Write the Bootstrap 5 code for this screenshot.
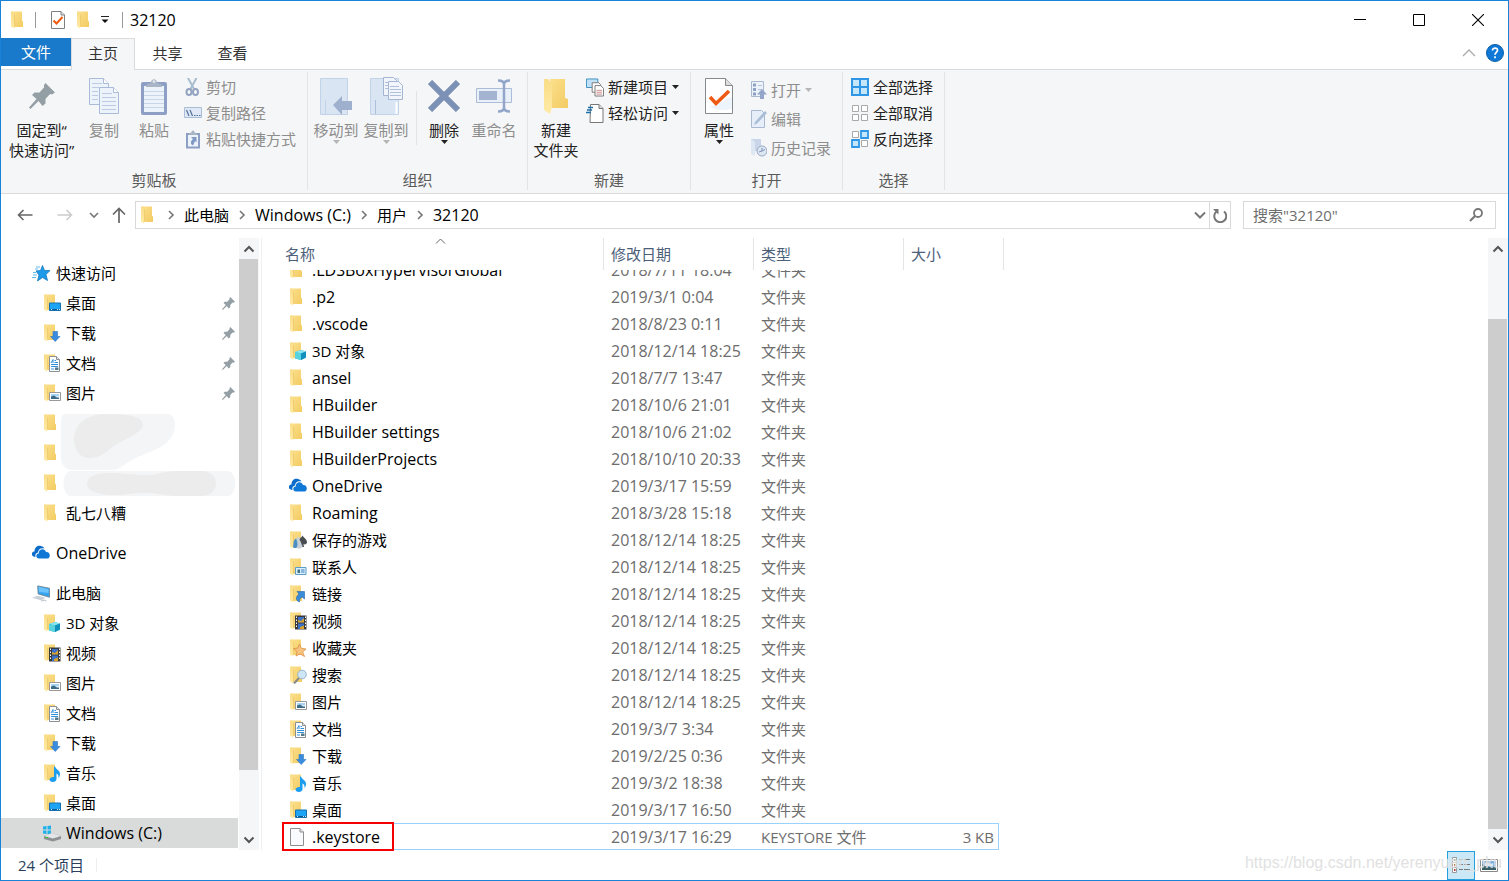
<!DOCTYPE html>
<html lang="zh-CN">
<head>
<meta charset="utf-8">
<meta name="viewport" content="width=device-width, initial-scale=1">
<title>32120</title>
<link href="https://cdn.jsdelivr.net/npm/bootstrap@5.3.0/dist/css/bootstrap.min.css" rel="stylesheet">
<script src="https://cdn.jsdelivr.net/npm/bootstrap@5.3.0/dist/js/bootstrap.bundle.min.js"></script>
<style>
body{font-family:"Open Sans","Noto Sans CJK SC",sans-serif;font-size:15px;line-height:20px;color:#000;background:#fff}
svg{display:block;flex:none}
button{border:0;background:none;padding:0;color:inherit;font:inherit}
a{color:inherit;text-decoration:none}
.latin{font-size:16px}
.frame{border:1px solid #1883d7}
/* title bar */
.titlebar{height:37px;padding:0 1px 0 9px}
.tick{width:1px;height:16px;background:#999}
.quick{gap:7px}
.quick .props{margin:0 4px 0 8px}
.quick .last{margin-left:6px}
.winbtn{width:59px;height:37px;display:flex;align-items:center;justify-content:center}
/* tabs */
.tabs{height:31px;color:#333}
.tabs button{width:65px;height:31px;padding-bottom:2px}
.tabs .filetab{width:70px;height:28px;padding:0;background:#1979ca;color:#fff}
.tabs .active{position:relative;z-index:1;width:64px;height:32px;padding-bottom:3px;background:#f5f6f7;border:1px solid #dadbdc;border-bottom:0}
.tools{gap:10px;padding:0 4px 1px 0}
/* ribbon */
.ribbon{height:125px;background:#f5f6f7;border-top:1px solid #dadbdc;border-bottom:1px solid #dadbdc;padding:2px 0 3px;color:#222}
.group{border-right:1px solid #e2e3e4;padding:0 3px}
.group h2{font-size:15px;line-height:20px;margin:0;font-weight:400;text-align:center;color:#5a5a5a}
.big{width:50px;display:flex;flex-direction:column;align-items:center;white-space:nowrap}
.big .pic{height:48px;display:flex;align-items:center;justify-content:center}
.big.wide{width:75px}
.ribbon button:disabled{color:#8d8d8d}
.stack3{padding:2px 8px 0 5px}
.stack3 button{display:flex;align-items:center;gap:4px;height:26px;white-space:nowrap}
.stack3.roomy{padding:3px 8px 0 7px}
.stack3.roomy button{height:29px}
.rule{width:1px;height:54px;background:#e2e3e4;margin:19px 2px 0 5px}
.tail{width:5px}
/* address row */
.addr{height:44px;padding-bottom:2px}
.box{height:28px;border:1px solid #d9d9d9}
.crumbs svg{margin:0 9px}
.crumbs .open{border-right:1px solid #d9d9d9}
.crumbs .open svg{margin:0 3px}
.crumbs .again svg{margin:0 3px}
.find{width:253px;margin-left:12px}
.find input{border:0;outline:0;background:none;min-width:0;color:#6d6d6d;padding-left:9px}
.find input::placeholder{color:#6d6d6d;opacity:1}
/* navigation pane */
.side{width:261px;border-right:1px solid #f0f0f0;padding-right:2px}
.tree{padding-top:20px}
.tree a{display:flex;align-items:center;gap:5px;height:30px;padding:0 4px 0 42px}
.tree a.root{padding-left:31px;gap:6px}
.tree .gap-top{margin-top:10px}
.tree a.here{background:#d9dbda;margin-right:1px}
.hid{position:relative}
.smudge{position:absolute;left:60px;top:6px;z-index:1}
.sbar{width:20px;background:#f5f6f7;flex:none}
.sbar button{width:19px;height:21px;display:flex;align-items:center;justify-content:center}
.thumb{width:19px;background:#cdcdcd}
/* file list */
.files{width:722px;table-layout:fixed;margin-left:20px;border-collapse:separate;border-spacing:0}
.files th{height:32px;padding:0 7px;font-weight:400;color:#4c607a;border-right:1px solid #e5e5e5}
.files th:first-child{padding-left:3px}
.files th:nth-child(4){border-right:0}
.files td{height:27px;padding:0 7px;color:#6d6d6d;white-space:nowrap;line-height:20px}
.files th:last-child,.files td:last-child{padding:0}
.files td:nth-child(2){font-size:16px}
.files td:nth-child(4){padding-right:4px;text-align:right}
.files tr>:nth-child(1){position:relative}
.nm{display:flex;align-items:center;gap:5px;color:#000}
.files tr.cut td{height:13px;padding-top:0}
.cut .clip{height:13px;overflow:hidden;display:flex;align-items:flex-end}
.cut .clip>*{height:27px;flex:none;display:flex;align-items:center}
.files tr.sel td:not(:last-child){border:solid #99d1ff;border-width:1px 0}
.files tr.sel td:nth-child(4){border-right-width:1px}
.ring{position:absolute;left:0;top:-2px;width:112px;height:29px;border:2px solid #f40000}
.sort{position:absolute;left:153px;top:0}
/* status bar */
.status{height:30px;color:#2b3f5c;padding-left:17px;padding-right:5px}
.status .split{width:1px;height:14px;background:#eee;margin-left:12px}
.viewbtn{width:28px;height:29px;display:flex;align-items:center;justify-content:center}
.viewbtn.on{background:#cbe8f6;border:1px solid #26a0da}
.wm{position:absolute;right:6px;bottom:7px;font:16px/20px "Liberation Sans",sans-serif;color:#dcdcdc;opacity:.85;text-shadow:0 0 1px #fff}
</style>
</head>
<body>
<svg width="0" height="0" class="position-absolute" aria-hidden="true">
<defs>
<linearGradient id="gy" x1="0" x2="1" y1="0" y2="1"><stop offset="0" stop-color="#fbe08c"/><stop offset="1" stop-color="#f3cb62"/></linearGradient>
<linearGradient id="gf" x1="0" x2="0" y1="0" y2="1"><stop offset="0" stop-color="#f9dc86"/><stop offset="1" stop-color="#ffeaa6"/></linearGradient>
<symbol id="fold" viewBox="0 0 18 18"><path d="M2 .5h10v9l1 1v5.500H4z" fill="url(#gy)"/><path d="M1 .5h2l2 2v12l-1 3-3-2z" fill="url(#gf)"/><path d="M4.500 3.500v12" stroke="#edc766" stroke-width=".8"/></symbol>
<symbol id="i-desk" viewBox="0 0 18 18"><use href="#fold"/><path d="M6.500 9h11v7.500h-11z" fill="#1ea4f5" stroke="#1670b0"/><path d="M7 15.500h10" stroke="#0b5a94"/><path d="M8 15.500h1m5 0h1m1 0h1" stroke="#cfe9fa"/></symbol>
<symbol id="i-down" viewBox="0 0 18 18"><use href="#fold"/><path d="M10 7.500h4.500v5h2.500l-4.800 5-4.700-5h2.500z" fill="#3a8dde" stroke="#2c76c0" stroke-width=".6"/></symbol>
<symbol id="i-doc" viewBox="0 0 18 18"><use href="#fold"/><path d="M6.500 2.500h7l3 3v12h-10z" fill="#fff" stroke="#8a8f94"/><path d="M13.500 2.500v3h3" fill="#e8e8e8" stroke="#8a8f94"/><path d="M8 9l2-3.500V9M11.500 6.500h1.500M11.500 8.500H15M8 10.500h7M8 12.500h7" fill="none" stroke="#2f8fd8"/><path d="M8 15h3" stroke="#2f8fd8"/><path d="M12 13.500h3.500v2.500H12z" fill="#557a8a"/></symbol>
<symbol id="i-pic" viewBox="0 0 18 18"><use href="#fold"/><path d="M6.500 8.500h11v8h-11z" fill="#fff" stroke="#999"/><path d="M8 10h8v2.500H8z" fill="#a9d3f3"/><path d="M8 15v-2.500l3-1 3 2h2V15z" fill="#3b6a86"/></symbol>
<symbol id="i-3d" viewBox="0 0 18 18"><use href="#fold"/><path d="M6 10l6-2 5 1.500v6L12 18l-6-1.500z" fill="#27b7d3"/><path d="M6 10l6-2 5 1.500-5 2z" fill="#8be5ee"/><path d="M12 11.500l5-2v6L12 18z" fill="#1190bd"/><path d="M6 10l6 1.500V18l-6-1.500z" fill="#59d3de"/></symbol>
<symbol id="i-vid" viewBox="0 0 18 18"><use href="#fold"/><path d="M6 3.500h11.500v14H6z" fill="#3a3a3a"/><path d="M9 5h6v5.500H9zM9 11.500h6V17H9z" fill="#3a70c8"/><path d="M9 8l3 1 3-3v4.500H9zM11 15l4-1.500V17h-4z" fill="#d9a22c"/><path d="M7.500 4.500v12M16.500 4.500v12" stroke="#fff" stroke-dasharray="1.500 1.500"/></symbol>
<symbol id="i-mus" viewBox="0 0 18 18"><use href="#fold"/><path d="M12 2.500c1 3 5 3.500 5 7.500 0 1.500-.6 3-1.500 4 .5-3-1-4-2-4.500V15c0 2-1.800 3-3.700 3S6.500 17 6.500 15.500 9 12.500 11 13V2.500z" fill="#1b9df0"/></symbol>
<symbol id="i-game" viewBox="0 0 18 18"><use href="#fold"/><path d="M4 16c1-4 0-7 3-8.500l3 2 .5 4 .5 3.500H5z" fill="#4c8fc5"/><path d="M13.500 4.500c1 2 4.500 4 4.500 6.500 0 2-2 3-3.500 2l.5 3h-4l1-3c-2 0-3-1-3-2.500C9 8 12.500 7 13.500 4.500z" fill="#474d52"/><path d="M8.500 6c2-1 3 1 2 3 2 2 1.500 4 3 6 .5 3-6 3.500-6 1.500 1.500-2 1-4 .5-6.500-1-1-.5-3 .5-4z" fill="#c9d1d6"/></symbol>
<symbol id="i-con" viewBox="0 0 18 18"><use href="#fold"/><path d="M6.500 9.500h10.500v7H6.500z" fill="#d9effb" stroke="#5a9dc8"/><path d="M8.500 11.500h2.500v3.500H8.500z" fill="#3e7288"/><path d="M12 12h3.500m-3.500 2h3.500" stroke="#3a7ac0"/></symbol>
<symbol id="i-link" viewBox="0 0 18 18"><use href="#fold"/><path d="M8 6.500h7.500v7.500L13 12c-2 1-3 3-2.500 5C7 16 6 12 10 9z" fill="#3a8bd8" stroke="#2565a8" stroke-width=".6"/></symbol>
<symbol id="i-fav" viewBox="0 0 18 18"><use href="#fold"/><path d="M10.500 5l1.800 4.200 4.700.8-3.300 3 1.800 4.500-4.500-2.600-4 2.100 1-4.300L4.500 9.500l4.200-.3z" fill="#f6c27c" stroke="#dd9148" stroke-width=".8"/></symbol>
<symbol id="i-srch" viewBox="0 0 18 18"><use href="#fold"/><path d="M5 17.500l5-5.500" stroke="#878787" stroke-width="2"/><circle cx="13" cy="8.500" r="4.300" fill="#cfe6f8" stroke="#93b3cc"/></symbol>
<symbol id="i-cloud" viewBox="0 0 18 18"><path d="M3.500 13C-1.500 12.500-1 7.500 2.500 7.500 2.500 3 6 1 9 2c2 .3 3 1.500 3.500 2.500C8.500 3.500 6 6 6 8.500 3.500 9 3 11 3.500 13z" fill="#0d6cc9"/><path d="M7 14.500c-3.500 0-3.500-5-.3-5C6.500 5 12.500 3.500 14 8c4.500-.5 5 6 1.500 6.500z" fill="#0f78d7"/></symbol>
<symbol id="i-star" viewBox="0 0 18 18"><path d="M10.500 1.500l2 5 5.500 0-4 4 1.500 6-5-3-5 3.500 1.500-6L4 7l4.500-.5z" fill="#1f9ae8" stroke="#1779bf" stroke-width=".8"/><path d="M4 3h4M3 5h3M1 8.500h3M1 11h4M0 13.500h4" stroke="#3aa7ec" stroke-width=".8"/></symbol>
<symbol id="i-pc" viewBox="0 0 19 18"><path d="M6 1.500L18.500 4v9.500L6.500 10z" fill="#35a3ee" stroke="#6f8291" stroke-width=".9"/><path d="M7 2.500L17.500 5v4l-10-1z" fill="#6cc4fa"/><path d="M0 14l6-2 8 2-4 3z" fill="#c9d1d8"/><path d="M10 17.500l3-1 2 1" stroke="#aab4bd" fill="none"/></symbol>
<symbol id="i-drive" viewBox="0 0 18 18"><path d="M0 2.500l3.500-.5v3.500H0zM4.500 2L8 1.500v4H4.500zM0 6.500h3.500V10L0 9.500zM4.500 6.500H8v4l-3.500-.5z" fill="#1fb1ea"/><path d="M1 12l8-3 9 3v3l-8 2.500L1 15z" fill="#8d9194"/><path d="M1 12l8-3 9 3-8 2.500z" fill="#e3e5e6"/><path d="M2 13.500h3" stroke="#37c837"/></symbol>
<symbol id="i-file" viewBox="0 0 18 18"><path d="M1.500.5h9.500l3.500 3.500v13.500h-13z" fill="#f8fafd" stroke="#8e8e8e"/><path d="M11 .5V4h3.500" fill="#e6e6e6" stroke="#8e8e8e"/></symbol>
<symbol id="i-pin" viewBox="0 0 26 26"><path d="M16.500 0L26 9.500 23 11.500l-2-.5-4.500 5v4.500l-3 2.500-4-5L1.500 26 0 24.500l7.500-8.500-4.500-4 2.500-2.500h5L15 4.500V2z" fill="#949fa5"/></symbol>
<symbol id="i-crumb" viewBox="0 0 8 10"><path d="M2 1l4 4-4 4" fill="none" stroke="#777" stroke-width="1.600"/></symbol>
<symbol id="i-tri" viewBox="0 0 7 4"><path d="M0 0h7L3.500 4z" fill="currentColor"/></symbol>
<symbol id="i-up" viewBox="0 0 12 8"><path d="M1.500 6.500L6 2l4.500 4.500" fill="none" stroke="#555" stroke-width="2"/></symbol>
<symbol id="i-dn" viewBox="0 0 12 8"><path d="M1.500 1.500L6 6l4.500-4.500" fill="none" stroke="#555" stroke-width="2"/></symbol>
</defs>
</svg>

<div class="frame vh-100 d-flex flex-column overflow-hidden position-relative">
  <header class="titlebar d-flex align-items-center">
    <div class="quick d-flex align-items-center">
      <svg width="18" height="18"><use href="#fold"/></svg>
      <span class="tick"></span>
      <button aria-label="属性" class="props"><svg width="14" height="18"><path d="M.5.500h9.500l3.500 3.500v13.500H.5z" fill="#fff" stroke="#7f8285"/><path d="M10 .5V4h3.500" fill="#ddd" stroke="#7f8285"/><path d="M2.500 9.500l3 3 6-6.500" fill="none" stroke="#ee5a14" stroke-width="2"/></svg></button>
      <button aria-label="新建文件夹"><svg width="18" height="18"><use href="#fold"/></svg></button>
      <button aria-label="自定义快速访问工具栏"><svg width="8" height="9"><path d="M0 1.500h8" stroke="#222"/><path d="M.5 4.500h7L4 8z" fill="#111"/></svg></button>
      <span class="tick last"></span>
      <span class="latin">32120</span>
    </div>
    <div class="d-flex ms-auto">
      <button class="winbtn" aria-label="最小化"><svg width="12" height="12"><path d="M0 5.500h12" stroke="#000"/></svg></button>
      <button class="winbtn" aria-label="最大化"><svg width="12" height="12"><path d="M.5.500h11v11H.5z" fill="none" stroke="#000"/></svg></button>
      <button class="winbtn" aria-label="关闭"><svg width="12" height="12"><path d="M0 0l12 12M12 0L0 12" stroke="#000" stroke-width="1.100"/></svg></button>
    </div>
  </header>

  <nav class="tabs d-flex align-items-start">
    <button class="filetab">文件</button>
    <button class="active">主页</button>
    <button>共享</button>
    <button>查看</button>
    <div class="tools ms-auto d-flex align-items-center h-100">
      <button class="w-auto h-auto p-0" aria-label="最小化功能区"><svg width="14" height="8"><path d="M1 7l6-6 6 6" fill="none" stroke="#aaa" stroke-width="1.300"/></svg></button>
      <button class="w-auto h-auto p-0" aria-label="帮助"><svg width="18" height="18"><circle cx="9" cy="9" r="8.500" fill="#0f78d7" stroke="#0b5fa8"/><path d="M6.500 6.500c0-3.500 5.500-3 5 0-.3 1.800-2.500 2-2.500 4.300M9 12.200v2" fill="none" stroke="#fff" stroke-width="1.700"/></svg></button>
    </div>
  </nav>

  <section class="ribbon d-flex flex-none">
    <div class="group d-flex flex-column">
      <div class="d-flex flex-grow-1">
        <button class="big wide"><span class="pic"><svg width="26" height="26"><use href="#i-pin"/></svg></span><span>固定到“<br>快速访问”</span></button>
        <button class="big" disabled><span class="pic"><svg width="30" height="36"><g stroke="#a9bbd6" fill="#edf3fb"><path d="M.5.500h14l5 5v21H.5z"/><path d="M10.500 9.500h14l5 5v21h-19z"/><path d="M14.500.5v5h5M24.500 9.500v5h5" fill="#fff"/></g><path d="M3 5.500h10M3 9.500h7M3 13.500h6M3 17.500h6M3 21.500h6M13 15.500h10M13 19.500h14M13 23.500h14M13 27.500h14M13 31.500h14" stroke="#bccbe2"/></svg></span>复制</button>
        <button class="big" disabled><span class="pic"><svg width="28" height="37"><rect x="1" y="4" width="26" height="33" rx="2" fill="#8d9fc4"/><path d="M4 8h20v26H4z" fill="#edf3fb"/><path d="M4 13.500h20M4 17.500h20M4 21.500h20M4 25.500h20M4 29.500h20" stroke="#c9d6e8"/><path d="M6 9c0-4 3-3 5-4 0-5 6-5 6 0 2 1 5 0 5 4z" fill="#a9b5c4"/><circle cx="14" cy="3.500" r="1.500" fill="#dfe5ec"/></svg></span>粘贴</button>
        <div class="stack3 d-flex flex-column">
          <button disabled><svg width="18" height="18"><path d="M4 0l6 11M12.500 0l-6 11" stroke="#a9bdd0" stroke-width="2"/><g fill="none" stroke="#93a3c0" stroke-width="2"><ellipse cx="5" cy="14" rx="2.500" ry="3"/><ellipse cx="11.500" cy="14" rx="2.500" ry="3"/></g></svg>剪切</button>
          <button disabled><svg width="18" height="12"><path d="M.5.500h17v10H.5z" fill="#dfe8f4" stroke="#a9bdd6"/><path d="M2.500 3l2.500 6M6 3l2.500 6M10 8.500h1.500m1 0H14m1 0h1.500" stroke="#53709c" stroke-width="1.200"/></svg>复制路径</button>
          <button disabled><svg width="18" height="19"><path d="M3 4h12v13.500H3z" fill="#edf3fb" stroke="#8d9fc4" stroke-width="2"/><path d="M5 5c0-3 2-1.500 2.500-3C8 0 10 0 10.500 2 11 3.500 13 2 13 5z" fill="#a9b5c4"/><path d="M7 7h5.500v5.500L11 11l-2 4.500C6 14 6.500 11 9 9z" fill="#7f98c4"/></svg>粘贴快捷方式</button>
        </div>
      </div>
      <h2>剪贴板</h2>
    </div>

    <div class="group d-flex flex-column">
      <div class="d-flex flex-grow-1">
        <button class="big" disabled><span class="pic"><svg width="33" height="37"><path d="M.5.500h27v36H.5z" fill="#dae5f4" stroke="#c2d2e8"/><path d="M5.500 22v14" stroke="#c2d2e8"/><path d="M13 27l9-9v5h10v9H22v5z" fill="#9fb0cf"/></svg></span>移动到<svg width="7" height="4"><use href="#i-tri" opacity=".6"/></svg></button>
        <button class="big" disabled><span class="pic"><svg width="33" height="38"><path d="M.5 1.500h28v36H.5z" fill="#dae5f4" stroke="#c2d2e8"/><path d="M13.500.500h10l3 3v15h-13z" fill="#f2f6fc" stroke="#a5b6d2"/><path d="M18.500 4.500h10l4 4v14h-14z" fill="#f2f6fc" stroke="#a5b6d2"/><path d="M15 5.500h3M15 8.500h3M15 11.500h3M20 9.500h9M20 12.500h11M20 15.500h11M20 18.500h11M5.500 23v14" stroke="#aebfda"/><path d="M26.500 25v12" stroke="#fff" stroke-width="2"/></svg></span>复制到<svg width="7" height="4"><use href="#i-tri" opacity=".6"/></svg></button>
        <span class="rule"></span>
        <button class="big"><span class="pic"><svg width="32" height="32"><path d="M2 2l28 28M30 2L2 30" stroke="#7d90b5" stroke-width="6"/></svg></span>删除<svg width="7" height="4"><use href="#i-tri"/></svg></button>
        <button class="big" disabled><span class="pic"><svg width="37" height="34"><path d="M.5 9.500h35v14H.5z" fill="#e9f0fa" stroke="#a9bcd8"/><path d="M3 12h18v9H3z" fill="#a3b3d0"/><path d="M22 1.500c4 0 6 1 6 4 0-3 2-4 6-4M28 4v26M22 32.500c4 0 6-1 6-4 0 3 2 4 6 4" fill="none" stroke="#93a5c8" stroke-width="2.500"/></svg></span>重命名</button>
        <span class="tail"></span>
      </div>
      <h2>组织</h2>
    </div>

    <div class="group d-flex flex-column">
      <div class="d-flex flex-grow-1">
        <button class="big"><span class="pic"><svg width="24" height="35"><path d="M6 0h15v19l3 1v9H8z" fill="url(#gy)"/><path d="M0 0h4l4 5v23l-2 7-6-4z" fill="url(#gf)"/></svg></span><span>新建<br>文件夹</span></button>
        <div class="stack3 d-flex flex-column">
          <button><svg width="18" height="19" viewBox="0 0 19 19"><path d="M.5.500h12v9H.5z" fill="#bfe0f6" stroke="#3b8fc0"/><path d="M6.500 4.500h7l2 2v8h-9z" fill="#fff" stroke="#777"/><path d="M9.500 7.500h6l3 3v8h-9z" fill="#fff" stroke="#777"/><path d="M11 12.500h6m-6 2h6m-6 2h6" stroke="#c98a8a"/></svg>新建项目<svg width="7" height="4"><use href="#i-tri"/></svg></button>
          <button><svg width="18" height="19" viewBox="0 0 18 19"><path d="M4.500.500h8.500l4 4v14H4z" fill="#fff" stroke="#777"/><path d="M13 .5v4h4" fill="#ddd" stroke="#777"/><path d="M2 3.500h5M1 6h5M0 8.500h5" stroke="#1f6fa8" stroke-width="1.500"/></svg>轻松访问<svg width="7" height="4"><use href="#i-tri"/></svg></button>
        </div>
      </div>
      <h2>新建</h2>
    </div>

    <div class="group d-flex flex-column">
      <div class="d-flex flex-grow-1">
        <button class="big"><span class="pic"><svg width="28" height="36"><path d="M.5.500h20l7 7v28H.5z" fill="#fff" stroke="#85898c"/><path d="M20.500.5v7h7" fill="#ddd" stroke="#85898c"/><path d="M4 28c10 2 14-8 23-9v12c-8 1-14 3-23-3z" fill="#edf4fb"/><path d="M5 19l6 6.500L24 13" fill="none" stroke="#ee5a14" stroke-width="3.500"/></svg></span>属性<svg width="7" height="4"><use href="#i-tri"/></svg></button>
        <div class="stack3 roomy d-flex flex-column">
          <button disabled><svg width="16" height="18"><path d="M.5.500h12v15H.5z" fill="#edf3fb" stroke="#a9b9d2"/><path d="M2 2.500h3v3H2zM2 7h3v3H2zM2 11.500h3v3H2z" fill="#8ea2c5"/><path d="M7 4.500h4M7 8.500h4" stroke="#b5c4da"/><path d="M11 8l5 5.500h-3V18H9v-4.500H6z" fill="#93a5c8"/></svg>打开<svg width="7" height="4"><use href="#i-tri" opacity=".6"/></svg></button>
          <button disabled><svg width="16" height="18"><path d="M.5.500h10l3 3v14H.5z" fill="#e6eff9" stroke="#a9b9d2"/><path d="M3 15l1-3L14 1l2 2L6 13.500z" fill="#a9bdd6"/></svg>编辑</button>
          <button disabled><svg width="16" height="18"><path d="M0 0h10v12H0z" fill="#c9d6ea"/><path d="M0 0l4 3v14l-4-2z" fill="#dde7f4"/><circle cx="11" cy="12" r="5" fill="#dde7f2" stroke="#98a9c6"/><path d="M11 9v3l3-1.500M8 13l3-1" fill="none" stroke="#7f93b8"/></svg>历史记录</button>
        </div>
      </div>
      <h2>打开</h2>
    </div>

    <div class="group d-flex flex-column">
      <div class="d-flex flex-grow-1">
        <div class="stack3 d-flex flex-column">
          <button><svg width="18" height="18"><path d="M0 0h18v18H0z" fill="#2f97e6"/><path d="M2 2h6v6H2zM10 2h6v6h-6zM2 10h6v6H2zM10 10h6v6h-6z" fill="#c5e6fb"/></svg>全部选择</button>
          <button><svg width="18" height="18"><path d="M1.500 1.500h6v6h-6zM10.500 1.500h6v6h-6zM1.500 10.500h6v6h-6zM10.500 10.500h6v6h-6z" fill="#fff" stroke="#a9a9a9"/></svg>全部取消</button>
          <button><svg width="18" height="18"><path d="M1.500 1.500h6v6h-6zM10.500 10.500h6v6h-6z" fill="#fff" stroke="#a9a9a9"/><path d="M10 1h7v7h-7zM1 10h7v7H1z" fill="#c5e6fb" stroke="#2f97e6" stroke-width="1.800"/></svg>反向选择</button>
        </div>
      </div>
      <h2>选择</h2>
    </div>
  </section>

  <div class="addr d-flex align-items-center flex-none ps-3 pe-2">
    <button aria-label="后退"><svg width="16" height="12"><path d="M15.500 6H1.500M6.500 1l-5 5 5 5" fill="none" stroke="#666" stroke-width="1.600"/></svg></button>
    <button aria-label="前进" class="ms-4" disabled><svg width="16" height="12"><path d="M.5 6h14M9.500 1l5 5-5 5" fill="none" stroke="#ccc" stroke-width="1.600"/></svg></button>
    <button aria-label="最近" class="ms-3"><svg width="10" height="8"><path d="M1 2l4 4 4-4" fill="none" stroke="#777" stroke-width="1.600"/></svg></button>
    <button aria-label="向上" class="ms-2 ps-1"><svg width="16" height="16"><path d="M8 16V1.500M2 7.500l6-6 6 6" fill="none" stroke="#666" stroke-width="1.700"/></svg></button>
    <div class="box crumbs d-flex align-items-center flex-grow-1 ms-2">
      <svg width="18" height="18" class="ms-1 me-0"><use href="#fold"/></svg>
      <svg width="8" height="10"><use href="#i-crumb"/></svg><a href="#">此电脑</a>
      <svg width="8" height="10"><use href="#i-crumb"/></svg><a href="#" class="latin">Windows (C:)</a>
      <svg width="8" height="10"><use href="#i-crumb"/></svg><a href="#">用户</a>
      <svg width="8" height="10"><use href="#i-crumb"/></svg><a href="#" class="latin">32120</a>
      <button class="open ms-auto h-100" aria-label="历史"><svg width="12" height="8"><path d="M1 1.500l5 5 5-5" fill="none" stroke="#777" stroke-width="2"/></svg></button>
      <button class="again" aria-label="刷新"><svg width="14" height="15"><path d="M3.500 3.500a6 6 0 1 0 7.500 0" fill="none" stroke="#777" stroke-width="2"/><path d="M0 1h5.500v5.500z" fill="#777"/></svg></button>
    </div>
    <div class="box find d-flex align-items-center me-1">
      <input type="search" class="flex-grow-1" aria-label="搜索" placeholder='搜索"32120"'>
      <button class="px-2 me-1" aria-label="开始搜索"><svg width="14" height="14"><circle cx="9" cy="5" r="4" fill="none" stroke="#777" stroke-width="1.800"/><path d="M6 8L1 13" stroke="#777" stroke-width="2.200"/></svg></button>
    </div>
  </div>

  <main class="d-flex flex-grow-1" style="min-height:0">
    <aside class="side d-flex flex-none">
      <nav class="tree flex-grow-1">
        <a href="#" class="root"><svg width="18" height="18"><use href="#i-star"/></svg>快速访问</a>
        <a href="#"><svg width="18" height="18"><use href="#i-desk"/></svg>桌面<svg width="13" height="13" class="ms-auto"><use href="#i-pin"/></svg></a>
        <a href="#"><svg width="18" height="18"><use href="#i-down"/></svg>下载<svg width="13" height="13" class="ms-auto"><use href="#i-pin"/></svg></a>
        <a href="#"><svg width="18" height="18"><use href="#i-doc"/></svg>文档<svg width="13" height="13" class="ms-auto"><use href="#i-pin"/></svg></a>
        <a href="#"><svg width="18" height="18"><use href="#i-pic"/></svg>图片<svg width="13" height="13" class="ms-auto"><use href="#i-pin"/></svg></a>
        <div class="hid">
          <a href="#" aria-label="文件夹"><svg width="18" height="18"><use href="#fold"/></svg></a>
          <a href="#" aria-label="文件夹"><svg width="18" height="18"><use href="#fold"/></svg></a>
          <a href="#" aria-label="文件夹"><svg width="18" height="18"><use href="#fold"/></svg></a>
          <svg class="smudge" width="174" height="83"><path d="M5 0h101c6 0 8 6 8 10 0 24-28 27-43 36-8 5-14 10-20 10H12C4 56 0 50 0 44V6c0-3 2-6 5-6z" fill="#f4f5f7"/><path d="M13 26C13 8 28 0 46 0c16 0 36 1 36 11 0 8-24 16-33 24-8 7-14 9-21 9-9 0-15-8-15-18z" fill="#ececec"/><path d="M10 57h156c11 0 11 25 0 25H10C0 82 0 57 10 57z" fill="#f4f5f7"/><path d="M26 70c0-8 10-11 22-11 14 0 24 2 38 2 16 0 10-4 36-4h18c20 0 20 25 0 25h-24c-14 0-14-3-34-3-14 0-14 2-30 2-14 0-26-4-26-11z" fill="#ececec"/></svg>
        </div>
        <a href="#"><svg width="18" height="18"><use href="#fold"/></svg>乱七八糟</a>
        <a href="#" class="root gap-top latin"><svg width="18" height="18"><use href="#i-cloud"/></svg>OneDrive</a>
        <a href="#" class="root gap-top"><svg width="18" height="18"><use href="#i-pc"/></svg>此电脑</a>
        <a href="#"><svg width="18" height="18"><use href="#i-3d"/></svg>3D 对象</a>
        <a href="#"><svg width="18" height="18"><use href="#i-vid"/></svg>视频</a>
        <a href="#"><svg width="18" height="18"><use href="#i-pic"/></svg>图片</a>
        <a href="#"><svg width="18" height="18"><use href="#i-doc"/></svg>文档</a>
        <a href="#"><svg width="18" height="18"><use href="#i-down"/></svg>下载</a>
        <a href="#"><svg width="18" height="18"><use href="#i-mus"/></svg>音乐</a>
        <a href="#"><svg width="18" height="18"><use href="#i-desk"/></svg>桌面</a>
        <a href="#" class="here latin"><svg width="18" height="18"><use href="#i-drive"/></svg>Windows (C:)</a>
      </nav>
      <div class="sbar d-flex flex-column">
        <button aria-label="向上滚动"><svg width="12" height="8"><use href="#i-up"/></svg></button>
        <div class="d-flex flex-column flex-grow-1"><div class="thumb" style="height:89.600%"></div></div>
        <button aria-label="向下滚动"><svg width="12" height="8"><use href="#i-dn"/></svg></button>
      </div>
    </aside>

    <div class="flex-grow-1">
      <table class="files">
        <colgroup><col style="width:322px"><col style="width:150px"><col style="width:150px"><col style="width:95px"><col style="width:5px"></colgroup>
        <thead><tr><th scope="col">名称<svg class="sort" width="11" height="6"><path d="M1 5.500l4.500-4.500L10 5.500" fill="none" stroke="#666"/></svg></th><th scope="col">修改日期</th><th scope="col">类型</th><th scope="col">大小</th><th></th></tr></thead>
        <tbody>
        <tr class="cut"><td><div class="clip"><span class="nm latin"><svg width="18" height="18"><use href="#fold"/></svg>.LDSBoxHypervisorGlobal</span></div></td><td><div class="clip"><span>2018/7/11 18:04</span></div></td><td><div class="clip"><span>文件夹</span></div></td><td></td><td></td></tr>
        <tr><td><span class="nm latin"><svg width="18" height="18"><use href="#fold"/></svg>.p2</span></td><td>2019/3/1 0:04</td><td>文件夹</td><td></td><td></td></tr>
        <tr><td><span class="nm latin"><svg width="18" height="18"><use href="#fold"/></svg>.vscode</span></td><td>2018/8/23 0:11</td><td>文件夹</td><td></td><td></td></tr>
        <tr><td><span class="nm"><svg width="18" height="18"><use href="#i-3d"/></svg>3D 对象</span></td><td>2018/12/14 18:25</td><td>文件夹</td><td></td><td></td></tr>
        <tr><td><span class="nm latin"><svg width="18" height="18"><use href="#fold"/></svg>ansel</span></td><td>2018/7/7 13:47</td><td>文件夹</td><td></td><td></td></tr>
        <tr><td><span class="nm latin"><svg width="18" height="18"><use href="#fold"/></svg>HBuilder</span></td><td>2018/10/6 21:01</td><td>文件夹</td><td></td><td></td></tr>
        <tr><td><span class="nm latin"><svg width="18" height="18"><use href="#fold"/></svg>HBuilder settings</span></td><td>2018/10/6 21:02</td><td>文件夹</td><td></td><td></td></tr>
        <tr><td><span class="nm latin"><svg width="18" height="18"><use href="#fold"/></svg>HBuilderProjects</span></td><td>2018/10/10 20:33</td><td>文件夹</td><td></td><td></td></tr>
        <tr><td><span class="nm latin"><svg width="18" height="18"><use href="#i-cloud"/></svg>OneDrive</span></td><td>2019/3/17 15:59</td><td>文件夹</td><td></td><td></td></tr>
        <tr><td><span class="nm latin"><svg width="18" height="18"><use href="#fold"/></svg>Roaming</span></td><td>2018/3/28 15:18</td><td>文件夹</td><td></td><td></td></tr>
        <tr><td><span class="nm"><svg width="18" height="18"><use href="#i-game"/></svg>保存的游戏</span></td><td>2018/12/14 18:25</td><td>文件夹</td><td></td><td></td></tr>
        <tr><td><span class="nm"><svg width="18" height="18"><use href="#i-con"/></svg>联系人</span></td><td>2018/12/14 18:25</td><td>文件夹</td><td></td><td></td></tr>
        <tr><td><span class="nm"><svg width="18" height="18"><use href="#i-link"/></svg>链接</span></td><td>2018/12/14 18:25</td><td>文件夹</td><td></td><td></td></tr>
        <tr><td><span class="nm"><svg width="18" height="18"><use href="#i-vid"/></svg>视频</span></td><td>2018/12/14 18:25</td><td>文件夹</td><td></td><td></td></tr>
        <tr><td><span class="nm"><svg width="18" height="18"><use href="#i-fav"/></svg>收藏夹</span></td><td>2018/12/14 18:25</td><td>文件夹</td><td></td><td></td></tr>
        <tr><td><span class="nm"><svg width="18" height="18"><use href="#i-srch"/></svg>搜索</span></td><td>2018/12/14 18:25</td><td>文件夹</td><td></td><td></td></tr>
        <tr><td><span class="nm"><svg width="18" height="18"><use href="#i-pic"/></svg>图片</span></td><td>2018/12/14 18:25</td><td>文件夹</td><td></td><td></td></tr>
        <tr><td><span class="nm"><svg width="18" height="18"><use href="#i-doc"/></svg>文档</span></td><td>2019/3/7 3:34</td><td>文件夹</td><td></td><td></td></tr>
        <tr><td><span class="nm"><svg width="18" height="18"><use href="#i-down"/></svg>下载</span></td><td>2019/2/25 0:36</td><td>文件夹</td><td></td><td></td></tr>
        <tr><td><span class="nm"><svg width="18" height="18"><use href="#i-mus"/></svg>音乐</span></td><td>2019/3/2 18:38</td><td>文件夹</td><td></td><td></td></tr>
        <tr><td><span class="nm"><svg width="18" height="18"><use href="#i-desk"/></svg>桌面</span></td><td>2019/3/17 16:50</td><td>文件夹</td><td></td><td></td></tr>
        <tr class="sel"><td><span class="nm latin"><svg width="18" height="18"><use href="#i-file"/></svg>.keystore</span><span class="ring"></span></td><td>2019/3/17 16:29</td><td>KEYSTORE 文件</td><td>3 KB</td><td></td></tr>
        </tbody>
      </table>
    </div>

    <div class="sbar d-flex flex-column">
      <button aria-label="向上滚动"><svg width="12" height="8"><use href="#i-up"/></svg></button>
      <div class="d-flex flex-column justify-content-end flex-grow-1"><div class="thumb" style="height:89.500%"></div></div>
      <button aria-label="向下滚动"><svg width="12" height="8"><use href="#i-dn"/></svg></button>
    </div>
  </main>

  <footer class="status d-flex align-items-center flex-none">
    <span>24 个项目</span><span class="split"></span>
    <button class="viewbtn on ms-auto" aria-label="详细信息"><svg width="18" height="16"><path d="M.5.500h4v15h-4zM.5 5.500h4M.5 10.500h4" fill="#fff" stroke="#999"/><path d="M2 3h1.500" stroke="#2a6a50" stroke-width="2"/><path d="M2 8h1.500" stroke="#b08030" stroke-width="2"/><path d="M2 13h1.500" stroke="#b04030" stroke-width="2"/><path d="M7 2.500h4m1 0h6M7 7.500h4m1 0h6M7 12.500h4m1 0h6" stroke="#777"/></svg></button>
    <button class="viewbtn" aria-label="大缩略图"><svg width="18" height="15"><path d="M.5 1.500h17v12H.5z" fill="#fff" stroke="#888"/><path d="M2 3h14v9H2z" fill="#6fa8dc"/><path d="M5 5c3-2 5 2 8 0v3H5z" fill="#dbeaf7"/><path d="M2 12V6l3 2 4 1 7 0v3z" fill="#345c62"/></svg></button>
  </footer>
  <span class="wm">https://blog.csdn.net/yerenyuan_pku</span>
</div>
</body>
</html>
